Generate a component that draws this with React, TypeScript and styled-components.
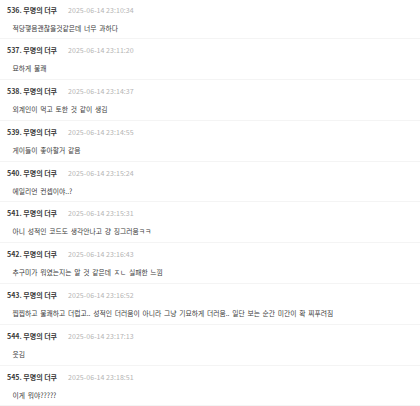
import React from "react";
import styled, { createGlobalStyle } from "styled-components";

const Global = createGlobalStyle`
  html, body { margin: 0; padding: 0; background: #ffffff; }
  body { font-family: "Noto Sans CJK KR", "Noto Sans", sans-serif; -webkit-font-smoothing: antialiased; }
`;

const List = styled.ul`
  list-style: none;
  margin: -1.5px 0 0 0;
  padding: 0;
  width: 420px;
`;

const Item = styled.li`
  padding: 6px 7px 4.8px 7px;
  border-bottom: 1px solid #f4f4f4;
`;

const Header = styled.div`
  display: flex;
  align-items: center;
  gap: 11px;
  height: 11px;
  line-height: 11px;
  white-space: nowrap;
`;

const Name = styled.span`
  font-size: 7px;
  font-weight: 700;
  color: #3a3a3a;
`;

const DateText = styled.span`
  font-size: 7px;
  color: #b4b4b4;
  letter-spacing: 0.05px;
`;

const Body = styled.div`
  margin-top: 7px;
  padding-left: 5.5px;
  height: 11px;
  line-height: 11px;
  font-size: 6.8px;
  word-spacing: 1.2px;
  color: #3c3c3c;
  white-space: nowrap;
  overflow: hidden;
`;

const items = [
  { n: 536, date: "2025-06-14 23:10:34", text: "적당햏음괜찮을것같은데 너무 과하다" },
  { n: 537, date: "2025-06-14 23:11:20", text: "묘하게 불쾌" },
  { n: 538, date: "2025-06-14 23:14:37", text: "외계인이 먹고 토한 것 같이 생김" },
  { n: 539, date: "2025-06-14 23:14:55", text: "게이들이 좋아할거 같음" },
  { n: 540, date: "2025-06-14 23:15:24", text: "에일리언 컨셉이야..?" },
  { n: 541, date: "2025-06-14 23:15:31", text: "아니 성적인 코드도 생각안나고 걍 징그러움ㅋㅋ" },
  { n: 542, date: "2025-06-14 23:16:43", text: "추구미가 뭐였는지는 알 것 같은데 ㅈㄴ 실패한 느낌" },
  { n: 543, date: "2025-06-14 23:16:52", text: "찝찝하고 불쾌하고 더럽고.. 성적인 더러움이 아니라 그냥 기묘하게 더러움.. 일단 보는 순간 미간이 확 찌푸려짐" },
  { n: 544, date: "2025-06-14 23:17:13", text: "웃김" },
  { n: 545, date: "2025-06-14 23:18:51", text: "이게 뭐야?????" },
];

export default function App() {
  return (
    <>
      <Global />
      <List>
        {items.map((it) => (
          <Item key={it.n}>
            <Header>
              <Name>{it.n}. 무명의 더쿠</Name>
              <DateText>{it.date}</DateText>
            </Header>
            <Body>{it.text}</Body>
          </Item>
        ))}
      </List>
    </>
  );
}
